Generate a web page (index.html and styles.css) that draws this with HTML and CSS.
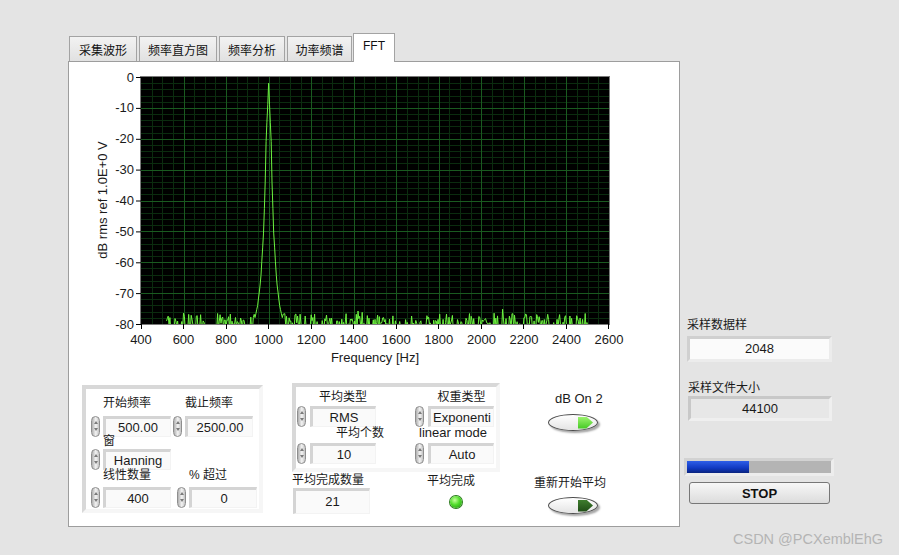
FILE: index.html
```html
<!DOCTYPE html>
<html lang="zh-CN">
<head>
    <meta charset="UTF-8">
    <meta name="viewport" content="width=device-width, initial-scale=1.0">
    <title>FFT</title>
    <link rel="stylesheet" href="styles.css">
</head>
<body>
    <div class="screen">
        <div class="tabview">
            <div class="tabs">
                <div class="tab w1">采集波形</div>
                <div class="tab w2">频率直方图</div>
                <div class="tab w3">频率分析</div>
                <div class="tab w4">功率频谱</div>
                <div class="tab active">FFT</div>
            </div>
            <div class="panel">
                <svg class="chart" width="545" height="300" viewBox="0 0 545 300">
                    <defs>
                        <clipPath id="plotClip"><rect x="51" y="11" width="468" height="247"/></clipPath>
                    </defs>
                    <rect class="plot-bg" x="51" y="11" width="468" height="247"/>
                    <path id="gridMinor" class="grid-minor" d=""/>
                    <path id="gridMajor" class="grid-major" d=""/>
                    <g clip-path="url(#plotClip)">
                        <path id="trace" class="trace" d=""/>
                    </g>
                    <rect class="plot-frame" x="50.5" y="10.5" width="469" height="248"/>
                    <path class="ticks" d="M46 11.5H51M46 42.4H51M46 73.3H51M46 104.1H51M46 135H51M46 165.9H51M46 196.8H51M46 227.6H51M46 258.5H51
                        M51.5 258V263M93.5 258V263M136.5 258V263M178.5 258V263M221.5 258V263M263.5 258V263M306.5 258V263M348.5 258V263M391.5 258V263M433.5 258V263M476.5 258V263M518.5 258V263"/>
                    <g class="axis-text" text-anchor="end">
                        <text x="44" y="15.5">0</text>
                        <text x="44" y="46.4">-10</text>
                        <text x="44" y="77.3">-20</text>
                        <text x="44" y="108.1">-30</text>
                        <text x="44" y="139">-40</text>
                        <text x="44" y="169.9">-50</text>
                        <text x="44" y="200.8">-60</text>
                        <text x="44" y="231.6">-70</text>
                        <text x="44" y="262.5">-80</text>
                    </g>
                    <g class="axis-text" text-anchor="middle">
                        <text x="51" y="277.5">400</text>
                        <text x="93.5" y="277.5">600</text>
                        <text x="136.1" y="277.5">800</text>
                        <text x="178.6" y="277.5">1000</text>
                        <text x="221.2" y="277.5">1200</text>
                        <text x="263.7" y="277.5">1400</text>
                        <text x="306.3" y="277.5">1600</text>
                        <text x="348.8" y="277.5">1800</text>
                        <text x="391.4" y="277.5">2000</text>
                        <text x="433.9" y="277.5">2200</text>
                        <text x="476.5" y="277.5">2400</text>
                        <text x="519" y="277.5">2600</text>
                        <text x="285" y="295.5">Frequency [Hz]</text>
                        <text transform="translate(16.5,134) rotate(-90)">dB rms ref 1.0E+0 V</text>
                    </g>
                </svg>

                <div class="controls">
                    <div class="cluster cluster-freq">
                        <div class="num">
                            <div class="lbl">开始频率</div>
                            <div class="ctl"><span class="spin"></span><div class="box">500.00</div></div>
                        </div>
                        <div class="num">
                            <div class="lbl">截止频率</div>
                            <div class="ctl"><span class="spin"></span><div class="box">2500.00</div></div>
                        </div>
                        <div class="num row-window">
                            <div class="lbl">窗</div>
                            <div class="ctl"><span class="spin"></span><div class="box">Hanning</div></div>
                        </div>
                        <div class="num row-lines first">
                            <div class="lbl">线性数量</div>
                            <div class="ctl"><span class="spin"></span><div class="box">400</div></div>
                        </div>
                        <div class="num row-lines shifted">
                            <div class="lbl">% 超过</div>
                            <div class="ctl"><span class="spin"></span><div class="box">0</div></div>
                        </div>
                    </div>

                    <div class="avg-column">
                        <div class="cluster cluster-avg">
                            <div class="num">
                                <div class="lbl">平均类型</div>
                                <div class="ctl"><span class="spin"></span><div class="box">RMS</div></div>
                            </div>
                            <div class="num">
                                <div class="lbl">权重类型</div>
                                <div class="ctl"><span class="spin"></span><div class="box">Exponenti</div></div>
                            </div>
                            <div class="num row-count">
                                <div class="lbl shift-r">平均个数</div>
                                <div class="ctl"><span class="spin"></span><div class="box">10</div></div>
                            </div>
                            <div class="num row-count">
                                <div class="lbl shift-l">linear mode</div>
                                <div class="ctl"><span class="spin"></span><div class="box">Auto</div></div>
                            </div>
                        </div>
                        <div class="avg-status">
                            <div class="done-count">
                                <div class="lbl">平均完成数量</div>
                                <div class="indicator">21</div>
                            </div>
                            <div class="done-led">
                                <div class="lbl">平均完成</div>
                                <div class="led"></div>
                            </div>
                        </div>
                    </div>

                    <div class="buttons">
                        <div class="btn-label db">dB On 2</div>
                        <div class="toggle on"><span class="arrow"></span></div>
                        <div class="btn-label restart">重新开始平均</div>
                        <div class="toggle off"><span class="arrow"></span></div>
                    </div>
                </div>
            </div>
        </div>

        <div class="side">
            <div class="side-label">采样数据样</div>
            <div class="readout light">2048</div>
            <div class="side-label second">采样文件大小</div>
            <div class="readout grey">44100</div>
            <div class="progress"><div class="fill"></div></div>
            <button class="stop">STOP</button>
        </div>
    </div>

    <div class="watermark">CSDN @PCXemblEhG</div>

    <script>
        const X0 = 51, Y0 = 11, W = 468, H = 247;

        function fx(f) { return X0 + (f - 400) / 2200 * W; }
        function fy(db) { return Y0 + (-db) / 80 * H; }

        // grid lines: minor every 50 Hz / 2 dB, major every 200 Hz / 10 dB
        let minor = '', major = '';
        for (let f = 450; f < 2600; f += 50) {
            const x = Math.round(fx(f)) + 0.5;
            const d = 'M' + x + ' 11V258';
            if (f % 200 === 0) major += d; else minor += d;
        }
        for (let db = -2; db > -80; db -= 2) {
            const y = Math.round(fy(db)) + 0.5;
            const d = 'M51 ' + y + 'H519';
            if (db % 10 === 0) major += d; else minor += d;
        }
        document.getElementById('gridMinor').setAttribute('d', minor);
        document.getElementById('gridMajor').setAttribute('d', major);

        // seeded noise so the picture is the same each time
        let seed = 20480;
        function rand() {
            seed |= 0; seed = seed + 0x6D2B79F5 | 0;
            let t = Math.imul(seed ^ seed >>> 15, 1 | seed);
            t = t + Math.imul(t ^ t >>> 7, 61 | t) ^ t;
            return ((t ^ t >>> 14) >>> 0) / 4294967296;
        }

        // peak shape around 1000 Hz (offset in Hz -> dB)
        const peak = [[0, -2], [4.7, -10], [11.8, -20], [14.1, -30], [18.8, -40], [23.5, -50],
                      [37.6, -66], [51.7, -74], [70.5, -80], [90, -86]];
        function peakLevel(df) {
            df = Math.abs(df);
            for (let i = 1; i < peak.length; i++) {
                if (df <= peak[i][0]) {
                    const a = peak[i - 1], b = peak[i];
                    return a[1] + (b[1] - a[1]) * (df - a[0]) / (b[0] - a[0]);
                }
            }
            return -120;
        }

        const bumps = { 600: -76.5, 680: -77, 820: -76.8, 1420: -75.8, 1440: -76.2, 2100: -75.2, 2060: -76.5, 2488: -76.6 };

        let d = '';
        for (let f = 520; f <= 2500; f += 4) {
            let v = -81.8 + 5.2 * Math.pow(rand(), 1.8);
            if (f > 705 && f < 748) v = -82 + rand();
            if (bumps[f] !== undefined) v = bumps[f];
            if (f > 900 && f < 1100) v = Math.max(v, peakLevel(f - 1000));
            d += (d ? 'L' : 'M') + fx(f).toFixed(1) + ' ' + fy(v).toFixed(1);
        }
        document.getElementById('trace').setAttribute('d', d);
    </script>
</body>
</html>
```

FILE: styles.css
```css
body {
    margin: 0;
    width: 899px;
    height: 555px;
    overflow: hidden;
    position: relative;
    background-color: #e4e4e4;
    color: #1a1a1a;
    font-family: "Liberation Sans", "Noto Sans CJK SC", sans-serif;
    font-size: 13px;
}
.screen {
    display: flex;
    align-items: flex-start;
    padding: 33px 0 0 68px;
}

/* tabs */
.tabview {
    width: 612px;
}
.tabs {
    display: flex;
    align-items: flex-end;
    gap: 2px;
    height: 28px;
    padding-left: 1px;
}
.tab {
    box-sizing: border-box;
    height: 25px;
    padding-top: 7px;
    border: 1px solid #a3a3a3;
    border-bottom: none;
    background: linear-gradient(#f2f2f2, #e1e1e1);
    font-family: "Noto Sans CJK SC", sans-serif;
    font-size: 12px;
    line-height: 12px;
    text-align: center;
    color: #111;
}
.tab.w1 { width: 68px; }
.tab.w2 { width: 78px; }
.tab.w3 { width: 66px; }
.tab.w4 { width: 65px; }
.tab.active {
    position: relative;
    z-index: 1;
    width: 42px;
    height: 29px;
    margin: 0 0 -1px -1px;
    padding-top: 6px;
    background: #fff;
    font-family: "Liberation Sans", sans-serif;
}
.panel {
    box-sizing: border-box;
    width: 612px;
    height: 466px;
    border: 1px solid #9d9d9d;
    background-color: #fff;
}

/* graph */
.chart {
    display: block;
    margin: 4px 0 0 21px;
}
.plot-bg {
    fill: #000;
}
.grid-minor {
    stroke: #0b2c0f;
    stroke-width: 1;
    fill: none;
}
.grid-major {
    stroke: #1a5a20;
    stroke-width: 1;
    fill: none;
}
.trace {
    stroke: #6cf23f;
    stroke-width: 1;
    fill: none;
}
.plot-frame {
    fill: none;
    stroke: #7a7a7a;
}
.ticks {
    stroke: #000;
    fill: none;
}
.axis-text {
    font-family: "Liberation Sans", sans-serif;
    font-size: 13px;
    fill: #1a1a1a;
}

/* bottom controls */
.controls {
    display: flex;
    align-items: flex-start;
    margin: 19px 0 0 13px;
}
.cluster {
    box-sizing: border-box;
    border: 4px solid;
    border-color: #d8d8d8 #f6f6f6 #f6f6f6 #d8d8d8;
    display: grid;
}
.lbl {
    height: 14px;
    line-height: 14px;
    font-size: 12px;
    white-space: nowrap;
}
.ctl {
    display: flex;
    align-items: center;
    height: 22px;
}
.spin {
    box-sizing: border-box;
    width: 9px;
    height: 21px;
    border: 1px solid #8e8e8e;
    border-radius: 5px;
    background: linear-gradient(90deg, #b0b0b0, #f4f4f4 55%, #c2c2c2);
    display: flex;
    flex-direction: column;
    align-items: center;
    justify-content: space-evenly;
}
.spin::before,
.spin::after {
    content: "";
    border-left: 2px solid transparent;
    border-right: 2px solid transparent;
}
.spin::before {
    border-bottom: 3px solid #7a7a7a;
}
.spin::after {
    border-top: 3px solid #7a7a7a;
}
.box {
    box-sizing: border-box;
    height: 21px;
    border-style: solid;
    border-width: 3px 1px 1px 3px;
    border-color: #d4d4d4 #f3f3f3 #f3f3f3 #d4d4d4;
    background-color: #fafafa;
    line-height: 17px;
    text-align: center;
}

.cluster-freq {
    width: 181px;
    height: 128px;
    padding: 7px 0 0 5px;
    grid-template-columns: 80px 84px;
    column-gap: 2px;
    align-content: start;
}
.cluster-freq .ctl {
    gap: 3px;
    margin-top: 5px;
}
.cluster-freq .box {
    width: 68px;
}
.cluster-freq .lbl {
    padding-left: 12px;
}
.cluster-freq .row-window {
    grid-column: 1 / -1;
    margin-top: -3px;
}
.cluster-freq .row-window .ctl {
    margin-top: 0;
}
.cluster-freq .row-lines {
    margin-top: -2px;
}
.cluster-freq .row-lines.first {
    grid-column: 1;
}
.cluster-freq .row-lines .ctl {
    margin-top: 4px;
}
.cluster-freq .shifted {
    grid-column: 2;
    margin-left: 4px;
}

.avg-column {
    margin: -2px 0 0 29px;
    width: 208px;
}
.cluster-avg {
    width: 208px;
    height: 89px;
    padding: 3px 0 0 1px;
    grid-template-columns: 79px 80px;
    column-gap: 39px;
    align-content: start;
}
.cluster-avg .ctl {
    gap: 4px;
    margin-top: 1px;
}
.cluster-avg .box {
    width: 66px;
}
.cluster-avg .lbl {
    padding-left: 13px;
    text-align: center;
}
.cluster-avg .lbl.shift-r {
    padding-left: 39px;
}
.cluster-avg .lbl.shift-l {
    padding-left: 0;
    margin-right: 4px;
    font-size: 13px;
}
.cluster-avg .row-count {
    margin-top: -1px;
}
.cluster-avg .row-count .ctl {
    margin-top: 2px;
}

.avg-status {
    display: flex;
    align-items: flex-start;
    margin-top: 1px;
}
.done-count {
    width: 78px;
}
.indicator {
    box-sizing: border-box;
    width: 77px;
    height: 26px;
    margin: 1px 0 0 1px;
    border-style: solid;
    border-width: 3px 1px 1px 3px;
    border-color: #d4d4d4 #f3f3f3 #f3f3f3 #d4d4d4;
    background-color: #fafafa;
    line-height: 22px;
    text-align: center;
}
.done-led {
    margin: 1px 0 0 57px;
}
.led {
    width: 12px;
    height: 12px;
    margin: 8px 0 0 23px;
    border-radius: 50%;
    background: radial-gradient(circle at 40% 35%, #c6ff9c, #4fdc2a 45%, #1f8a12);
    box-shadow: 0 0 0 1px #2b7a1c;
}

.buttons {
    width: 72px;
    margin-left: 34px;
    padding-top: 7px;
}
.btn-label {
    height: 14px;
    line-height: 14px;
    font-size: 12px;
    white-space: nowrap;
}
.btn-label.db {
    padding-left: 21px;
    font-size: 13px;
}
.btn-label.restart {
    margin-top: 45px;
}
.toggle {
    box-sizing: border-box;
    width: 50px;
    height: 17px;
    margin: 8px 0 0 14px;
    border: 1px solid #4e4e4e;
    border-radius: 50%;
    background: linear-gradient(#ffffff, #e4e4e4);
    box-shadow: 2px 2px 2px rgba(0, 0, 0, 0.35);
    display: flex;
    align-items: center;
    justify-content: flex-end;
    padding-right: 4px;
}
.toggle.off {
    margin-top: 7px;
}
.toggle .arrow {
    width: 15px;
    height: 12px;
    clip-path: polygon(0 0, 55% 0, 100% 50%, 55% 100%, 0 100%);
}
.toggle.on .arrow {
    background: linear-gradient(#9cf36e, #43c923);
}
.toggle.off .arrow {
    background: linear-gradient(#3f7d2e, #1f4c15);
}

/* right column */
.side {
    margin: 285px 0 0 6px;
    width: 150px;
}
.side-label {
    height: 14px;
    line-height: 14px;
    padding-left: 1px;
    font-size: 12px;
}
.side-label.second {
    margin-top: 19px;
    padding-left: 2px;
}
.readout {
    box-sizing: border-box;
    width: 145px;
    border: 3px solid;
    text-align: center;
}
.readout.light {
    height: 26px;
    margin: 4px 0 0 1px;
    border-color: #d0d0d0 #ececec #ececec #d0d0d0;
    background-color: #fbfbfb;
    line-height: 20px;
}
.readout.grey {
    width: 144px;
    height: 25px;
    margin: 1px 0 0 2px;
    border-color: #c8c8c8 #efefef #efefef #c8c8c8;
    background-color: #e7e7e7;
    line-height: 19px;
}
.progress {
    box-sizing: border-box;
    width: 150px;
    height: 18px;
    margin: 37px 0 0 -2px;
    border: 3px solid;
    border-color: #d2d2d2 #ededed #ededed #d2d2d2;
    background-color: #b4b4b4;
}
.progress .fill {
    width: 62px;
    height: 100%;
    background: linear-gradient(#2e5ee8, #1038c0 60%, #0a247e);
}
.stop {
    display: block;
    box-sizing: border-box;
    width: 141px;
    height: 22px;
    margin: 6px 0 0 3px;
    border: 1px solid #777;
    border-radius: 3px;
    background: linear-gradient(#f7f7f7, #dcdcdc);
    font-family: "Liberation Sans", sans-serif;
    font-size: 13px;
    font-weight: bold;
    color: #111;
    padding: 0;
}

.watermark {
    position: absolute;
    left: 733px;
    top: 531px;
    font-family: "Liberation Sans", sans-serif;
    font-size: 14.5px;
    color: #b4b4b4;
}
```
